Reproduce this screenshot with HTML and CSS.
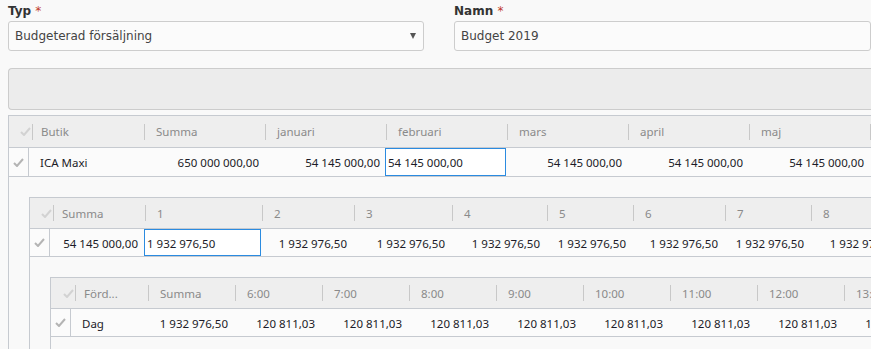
FILE: index.html
```html
<!DOCTYPE html>
<html lang="sv">
<head>
    <meta charset="UTF-8">
    <title>Budget</title>
    <link rel="stylesheet" href="styles.css">
</head>
<body>
    <div class="fields">
        <div class="field field-type">
            <label>Typ <span class="req">*</span></label>
            <div class="select">
                <span>Budgeterad försäljning</span>
                <span class="arrow"></span>
            </div>
        </div>
        <div class="field field-name">
            <label>Namn <span class="req">*</span></label>
            <div class="input">Budget 2019</div>
        </div>
    </div>

    <div class="toolbar"></div>

    <!-- Butiker -->
    <div class="grid grid-main">
        <div class="head">
            <div class="hcheck"><svg width="11" height="9" viewBox="0 0 11 9"><polyline points="1,5 4,8 10,1" /></svg></div>
            <div class="hcell first">Butik</div>
            <div class="hcell">Summa</div>
            <div class="hcell">januari</div>
            <div class="hcell">februari</div>
            <div class="hcell">mars</div>
            <div class="hcell">april</div>
            <div class="hcell">maj</div>
            <div class="hcell">juni</div>
        </div>
        <div class="row">
            <div class="check"><svg width="11" height="9" viewBox="0 0 11 9"><polyline points="1,5 4,8 10,1" /></svg></div>
            <div class="cell text">ICA Maxi</div>
            <div class="cell">650 000 000,00</div>
            <div class="cell">54 145 000,00</div>
            <div class="cell edit">54 145 000,00</div>
            <div class="cell">54 145 000,00</div>
            <div class="cell">54 145 000,00</div>
            <div class="cell">54 145 000,00</div>
            <div class="cell">54 145 000,00</div>
        </div>
        <div class="detail">

            <!-- Dagar -->
            <div class="grid grid-days">
                <div class="head">
                    <div class="hcheck"><svg width="11" height="9" viewBox="0 0 11 9"><polyline points="1,5 4,8 10,1" /></svg></div>
                    <div class="hcell first">Summa</div>
                    <div class="hcell">1</div>
                    <div class="hcell">2</div>
                    <div class="hcell">3</div>
                    <div class="hcell">4</div>
                    <div class="hcell">5</div>
                    <div class="hcell">6</div>
                    <div class="hcell">7</div>
                    <div class="hcell">8</div>
                </div>
                <div class="row">
                    <div class="check"><svg width="11" height="9" viewBox="0 0 11 9"><polyline points="1,5 4,8 10,1" /></svg></div>
                    <div class="cell">54 145 000,00</div>
                    <div class="cell edit">1 932 976,50</div>
                    <div class="cell">1 932 976,50</div>
                    <div class="cell">1 932 976,50</div>
                    <div class="cell">1 932 976,50</div>
                    <div class="cell">1 932 976,50</div>
                    <div class="cell">1 932 976,50</div>
                    <div class="cell">1 932 976,50</div>
                    <div class="cell">1 932 976,50</div>
                </div>
                <div class="detail">

                    <!-- Timmar -->
                    <div class="grid grid-hours">
                        <div class="head">
                            <div class="hcheck"><svg width="11" height="9" viewBox="0 0 11 9"><polyline points="1,5 4,8 10,1" /></svg></div>
                            <div class="hcell first">Förd...</div>
                            <div class="hcell">Summa</div>
                            <div class="hcell">6:00</div>
                            <div class="hcell">7:00</div>
                            <div class="hcell">8:00</div>
                            <div class="hcell">9:00</div>
                            <div class="hcell">10:00</div>
                            <div class="hcell">11:00</div>
                            <div class="hcell">12:00</div>
                            <div class="hcell">13:00</div>
                        </div>
                        <div class="row">
                            <div class="check"><svg width="11" height="9" viewBox="0 0 11 9"><polyline points="1,5 4,8 10,1" /></svg></div>
                            <div class="cell text">Dag</div>
                            <div class="cell">1 932 976,50</div>
                            <div class="cell">120 811,03</div>
                            <div class="cell">120 811,03</div>
                            <div class="cell">120 811,03</div>
                            <div class="cell">120 811,03</div>
                            <div class="cell">120 811,03</div>
                            <div class="cell">120 811,03</div>
                            <div class="cell">120 811,03</div>
                            <div class="cell">120 811,03</div>
                        </div>
                        <div class="detail"></div>
                    </div>

                </div>
            </div>

        </div>
    </div>
</body>
</html>
```

FILE: styles.css
```css
html, body {
    overflow: hidden;
}
body {
    margin: 0;
    padding: 2px 0 0 8px;
    background-color: #f9f9f9;
    font-family: "DejaVu Sans", Verdana, sans-serif;
    font-size: 12px;
    color: #333;
}
.fields {
    display: flex;
    gap: 30px;
}
.field-type {
    width: 416px;
}
.field-name {
    width: 417px;
}
.field label {
    display: block;
    height: 18px;
    line-height: 18px;
    font-weight: bold;
    color: #333;
}
.req {
    color: #c0392b;
    font-weight: normal;
}
.select, .input {
    display: flex;
    align-items: center;
    justify-content: space-between;
    box-sizing: border-box;
    height: 30px;
    margin-top: 1px;
    padding: 0 7px 0 6px;
    background-color: #fbfbfb;
    border: 1px solid #cdcdcd;
    border-radius: 3px;
    color: #444;
}
.arrow {
    width: 0;
    height: 0;
    border-left: 3.5px solid transparent;
    border-right: 3.5px solid transparent;
    border-top: 6px solid #555;
}
.toolbar {
    height: 40px;
    margin-top: 17px;
    margin-right: -4px;
    background-color: #ececec;
    border: 1px solid #cccccc;
    border-right: none;
    border-radius: 4px 0 0 4px;
}

/* grids */
.grid {
    margin-top: 5px;
    border-top: 1px solid #c6cad0;
    border-left: 1px solid #c6cad0;
    font-family: "Noto Sans", "Open Sans", sans-serif;
    font-size: 11.5px;
    color: #1c1c28;
}
.grid .grid {
    margin-top: 0;
}
.head, .row {
    display: grid;
    border-bottom: 1px solid #c6cad0;
}
.head {
    height: 31px;
    background-color: #eeeeee;
    color: #8a8a8a;
}
.row {
    height: 28px;
    background-color: #fbfbfb;
}
.hcheck {
    display: flex;
    align-items: center;
    justify-content: flex-end;
    padding-right: 1px;
}
.hcheck polyline, .check polyline {
    fill: none;
    stroke-width: 2;
}
.hcheck polyline {
    stroke: #d2d2d2;
}
.check {
    display: flex;
    align-items: center;
    justify-content: center;
    border-right: 1px solid #c6cad0;
}
.check polyline {
    stroke: #b4b4b4;
}
.hcell {
    display: flex;
    align-items: center;
    padding-left: 12px;
    white-space: nowrap;
    background: linear-gradient(#c8c8c8, #c8c8c8) left center / 1px 16px no-repeat;
}
.hcell.first {
    padding-left: 9px;
}
.cell {
    display: flex;
    align-items: center;
    justify-content: flex-end;
    padding-right: 5px;
    padding-top: 1px;
    white-space: nowrap;
}
.cell.text {
    justify-content: flex-start;
    padding-left: 11px;
}
.cell.edit {
    justify-content: flex-start;
    padding-left: 2px;
    background-color: #ffffff;
    border: 1px solid #2b8be0;
}
.detail {
    padding: 20px 0 0 20px;
}

.grid-main .head {
    grid-template-columns: 23px 112px repeat(7, 121px);
}
.grid-main .row {
    grid-template-columns: 20px 114px repeat(7, 121px);
}

.grid-days .head {
    height: 30px;
    grid-template-columns: 23px 92px 117px 92px 98px 95px 86px 92px 86px 94px;
}
.grid-days .row {
    height: 27px;
    grid-template-columns: 20px 94px 117px 92px 98px 95px 86px 92px 86px 94px;
}
.grid-days .cell {
    padding-right: 6px;
}
.grid-days .cell.edit {
    padding-right: 0;
}
.grid-days .detail {
    padding-top: 20px;
}

.grid-hours .head {
    grid-template-columns: 24px 73px 87px repeat(8, 87px);
}
.grid-hours .row {
    height: 27px;
    grid-template-columns: 20px 76px 87px repeat(8, 87px);
}
.grid-hours .cell {
    padding-right: 6px;
}
.grid-hours .cell.text {
    padding-left: 11px;
}
```
